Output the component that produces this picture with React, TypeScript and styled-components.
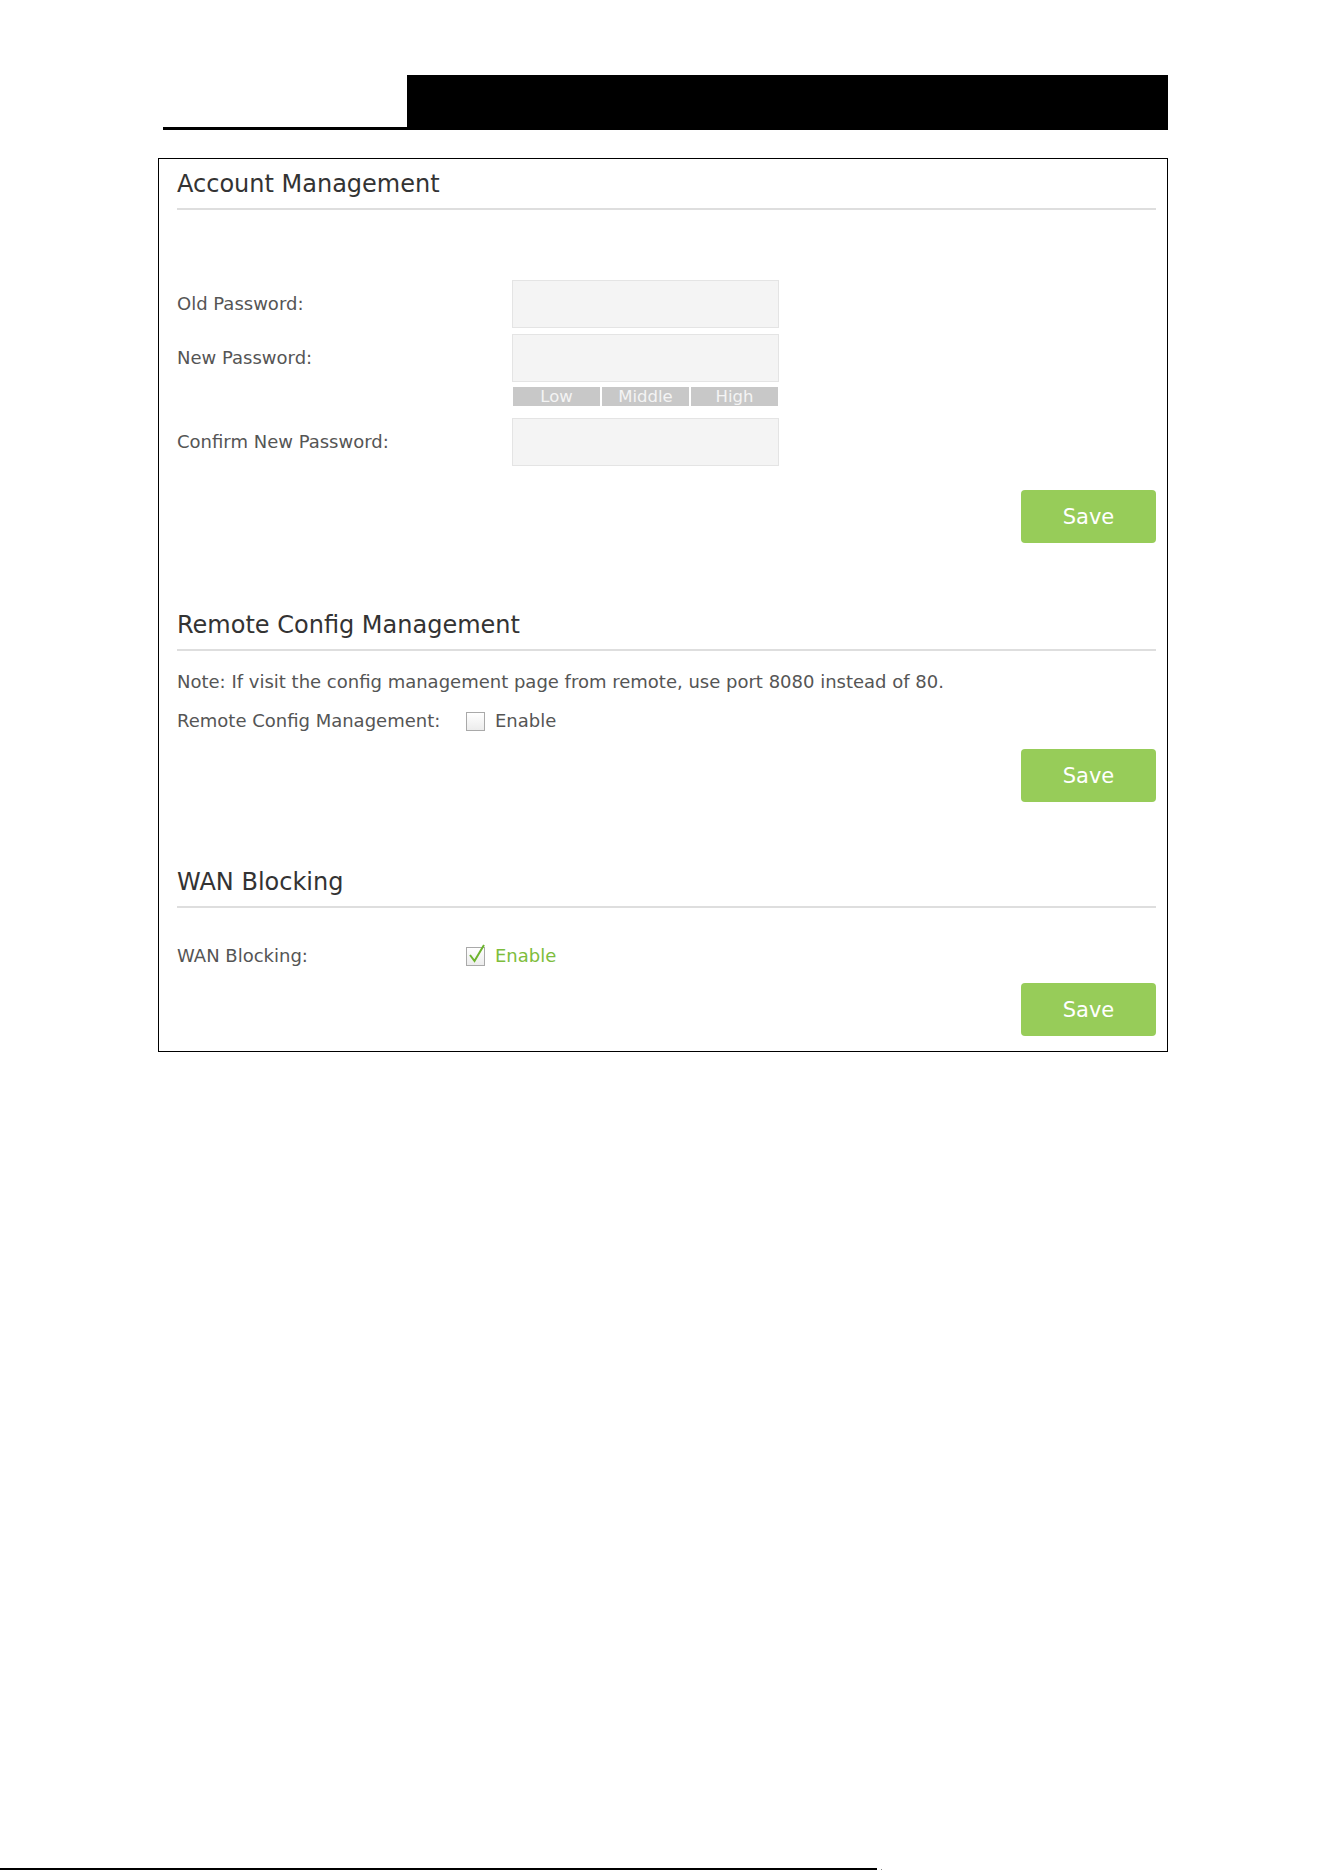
import React from 'react';
import styled, { createGlobalStyle } from 'styled-components';

const GlobalStyle = createGlobalStyle`
  html, body {
    margin: 0;
    padding: 0;
    background: #fff;
  }
  body {
    font-family: "DejaVu Sans", Tahoma, Verdana, sans-serif;
  }
`;

const Page = styled.div`
  min-height: 1872px;
  display: flex;
  flex-direction: column;
`;

const Wrap = styled.div`
  margin-left: 158px;
  width: 1010px;
  padding-top: 75px;
`;

const Header = styled.div`
  display: flex;
  height: 55px;
  margin-left: 5px;
`;

const HeaderRule = styled.div`
  width: 244px;
  box-sizing: border-box;
  border-bottom: 3px solid #000;
`;

const HeaderBar = styled.div`
  flex: 1;
  background: #000;
`;

const Panel = styled.div`
  margin-top: 28px;
  border: 1px solid #000;
  padding: 0 11px 15px 18px;
`;

const Section = styled.div<{ $gap: number }>`
  padding-top: ${(p) => p.$gap}px;
`;

const Title = styled.div`
  font-size: 24px;
  line-height: 30px;
  color: #333;
  padding-bottom: 9px;
  border-bottom: 2px solid #dedede;
`;

const Form = styled.div<{ $top: number }>`
  padding-top: ${(p) => p.$top}px;
  display: flex;
  flex-direction: column;
`;

const FieldRow = styled.div<{ $mt?: number }>`
  display: flex;
  align-items: center;
  margin-top: ${(p) => p.$mt || 0}px;
`;

const Label = styled.div<{ $w: number }>`
  width: ${(p) => p.$w}px;
  flex-shrink: 0;
  font-size: 18px;
  line-height: 24px;
  color: #555;
`;

const Input = styled.input`
  width: 267px;
  height: 48px;
  box-sizing: border-box;
  background: #f4f4f4;
  border: 1px solid #e4e4e4;
  margin: 0;
  padding: 0 8px;
  outline: none;
`;

const Strength = styled.div`
  display: flex;
  gap: 2px;
  margin: 5px 0 0 336px;
  width: 265px;
  height: 19px;
`;

const Level = styled.div`
  flex: 1;
  background: #c8c8c8;
  color: #f4f4f4;
  font-size: 16.5px;
  line-height: 20px;
  text-align: center;
  overflow: hidden;
`;

const Note = styled.div`
  font-size: 18px;
  line-height: 24px;
  color: #555;
  margin-top: 19px;
`;

const Check = styled.label<{ $on?: boolean }>`
  display: flex;
  align-items: center;
  gap: 10px;
  font-size: 18px;
  line-height: 24px;
  color: ${(p) => (p.$on ? '#7dbd3c' : '#555')};
`;

const Box = styled.span`
  position: relative;
  width: 19px;
  height: 19px;
  box-sizing: border-box;
  border: 1px solid #a9a9a9;
  background: linear-gradient(#fff, #ececec);
  display: inline-block;
`;

const Tick = styled.svg`
  position: absolute;
  left: 1px;
  top: -4px;
`;

const Actions = styled.div<{ $mt: number }>`
  display: flex;
  justify-content: flex-end;
  margin-top: ${(p) => p.$mt}px;
`;

const SaveButton = styled.button`
  width: 135px;
  height: 53px;
  border: none;
  border-radius: 4px;
  background: #97cc59;
  color: #fff;
  font-family: inherit;
  font-size: 21px;
  cursor: pointer;
`;

const Footer = styled.div`
  margin-top: auto;
  margin-bottom: 2px;
  display: flex;
  align-items: flex-end;
  gap: 4px;
`;

const FooterRule = styled.div`
  width: 877px;
  height: 2px;
  background: #000;
`;

const FooterDot = styled.div`
  width: 1px;
  height: 1px;
  background: #888;
`;

function CheckBox({ on }: { on?: boolean }) {
  return (
    <Box>
      {on && (
        <Tick width="18" height="20" viewBox="0 0 18 20">
          <path d="M2 11 L6.5 17 L16 1" fill="none" stroke="#6cb42c" strokeWidth="2" />
        </Tick>
      )}
    </Box>
  );
}

export default function App() {
  return (
    <Page>
      <GlobalStyle />
      <Wrap>
        <Header>
          <HeaderRule />
          <HeaderBar />
        </Header>
        <Panel>
          <Section $gap={10}>
            <Title>Account Management</Title>
            <Form $top={70}>
              <FieldRow>
                <Label $w={335}>Old Password:</Label>
                <Input type="password" />
              </FieldRow>
              <FieldRow $mt={6}>
                <Label $w={335}>New Password:</Label>
                <Input type="password" />
              </FieldRow>
              <Strength>
                <Level>Low</Level>
                <Level>Middle</Level>
                <Level>High</Level>
              </Strength>
              <FieldRow $mt={12}>
                <Label $w={335}>Confirm New Password:</Label>
                <Input type="password" />
              </FieldRow>
            </Form>
            <Actions $mt={24}>
              <SaveButton>Save</SaveButton>
            </Actions>
          </Section>

          <Section $gap={67}>
            <Title>Remote Config Management</Title>
            <Note>Note: If visit the config management page from remote, use port 8080 instead of 80.</Note>
            <FieldRow $mt={15}>
              <Label $w={289}>Remote Config Management:</Label>
              <Check>
                <CheckBox />
                Enable
              </Check>
            </FieldRow>
            <Actions $mt={16}>
              <SaveButton>Save</SaveButton>
            </Actions>
          </Section>

          <Section $gap={65}>
            <Title>WAN Blocking</Title>
            <FieldRow $mt={36}>
              <Label $w={289}>WAN Blocking:</Label>
              <Check $on>
                <CheckBox on />
                Enable
              </Check>
            </FieldRow>
            <Actions $mt={15}>
              <SaveButton>Save</SaveButton>
            </Actions>
          </Section>
        </Panel>
      </Wrap>
      <Footer>
        <FooterRule />
        <FooterDot />
      </Footer>
    </Page>
  );
}
